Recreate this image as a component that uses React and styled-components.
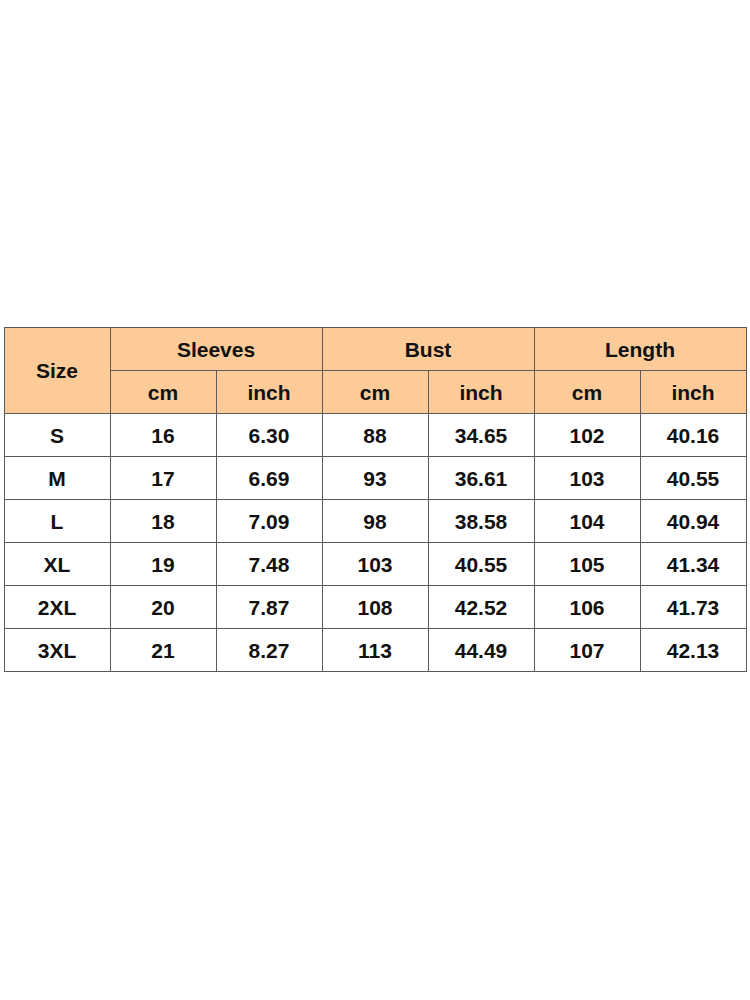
import React from 'react';
import styled, { createGlobalStyle } from 'styled-components';

const GlobalStyle = createGlobalStyle`
  html, body { margin: 0; padding: 0; background: #fff; }
  body { font-family: "Liberation Sans", Arial, sans-serif; }
`;

const Page = styled.div`
  width: 750px;
  height: 1000px;
  display: flex;
  align-items: center;
  justify-content: center;
`;

const Table = styled.table`
  border-collapse: collapse;
  table-layout: fixed;
  width: 743px;
  margin-top: -2px;
`;

const Cell = styled.td`
  border: 1px solid #5a5a5a;
  height: 43px;
  padding: 2px 0 0;
  box-sizing: border-box;
  line-height: 24px;
  text-align: center;
  vertical-align: middle;
  font-size: 21px;
  font-weight: bold;
  color: #111;
  background: ${({ head }) => (head ? '#fccb98' : '#fff')};
`;

const cols = ['Sleeves', 'Bust', 'Length'];

const rows = [
  ['S', '16', '6.30', '88', '34.65', '102', '40.16'],
  ['M', '17', '6.69', '93', '36.61', '103', '40.55'],
  ['L', '18', '7.09', '98', '38.58', '104', '40.94'],
  ['XL', '19', '7.48', '103', '40.55', '105', '41.34'],
  ['2XL', '20', '7.87', '108', '42.52', '106', '41.73'],
  ['3XL', '21', '8.27', '113', '44.49', '107', '42.13'],
];

export default function App() {
  return (
    <Page>
      <GlobalStyle />
      <Table>
        <tbody>
          <tr>
            <Cell as="th" head rowSpan={2}>Size</Cell>
            {cols.map((c) => (
              <Cell as="th" head colSpan={2} key={c}>{c}</Cell>
            ))}
          </tr>
          <tr>
            {cols.map((c) => (
              <React.Fragment key={c}>
                <Cell as="th" head>cm</Cell>
                <Cell as="th" head>inch</Cell>
              </React.Fragment>
            ))}
          </tr>
          {rows.map((r) => (
            <tr key={r[0]}>
              {r.map((v, i) => (
                <Cell key={i}>{v}</Cell>
              ))}
            </tr>
          ))}
        </tbody>
      </Table>
    </Page>
  );
}
